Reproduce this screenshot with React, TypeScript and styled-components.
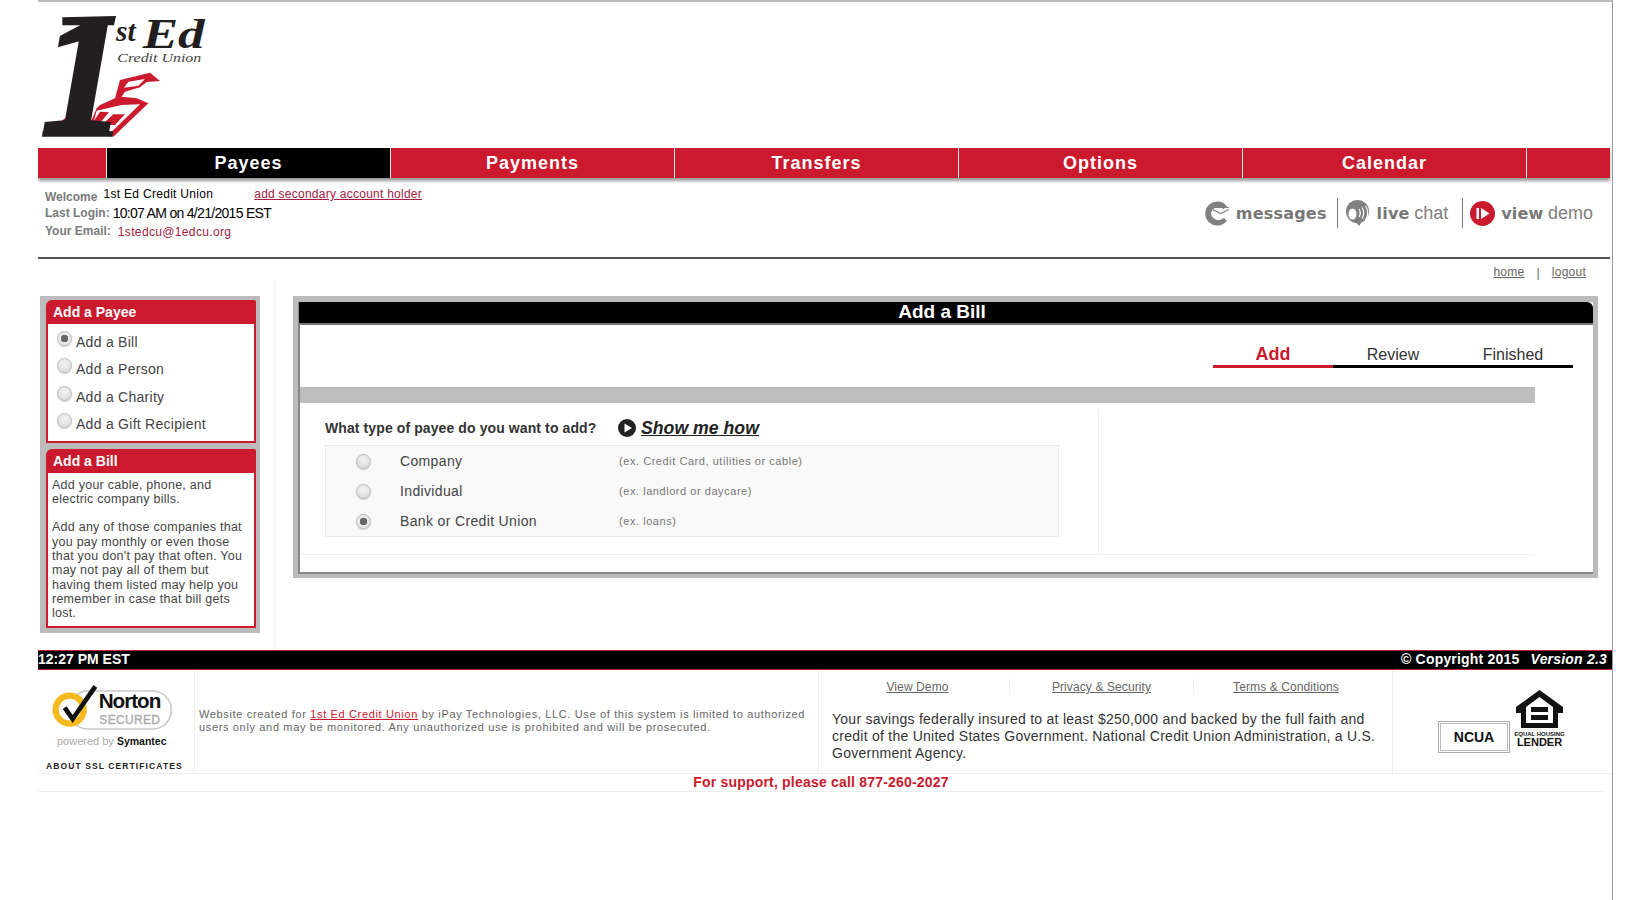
import React from 'react'
import styled, { createGlobalStyle } from 'styled-components'

const RED = '#cb1a2e'
const SANS = '"Liberation Sans", Arial, sans-serif'

const GlobalStyle = createGlobalStyle`
  html, body {
    margin: 0;
    padding: 0;
    background: #fff;
    font-family: ${SANS};
  }
  * { box-sizing: border-box; }
`

const Logo = () => (
  <LogoSvg viewBox="24 45 510 375">
    {/* house, coordinates taken from a 3x crop of the logo */}
    <polygon points="170,395 200,325 210,315 255,295 270,240 360,218 390,243 350,246 330,262 285,275 275,290 320,295 355,310 250,410" fill={RED} />
    <polygon points="295,245 345,237 325,257 282,263" fill="#fff" />
    <polygon points="200,332 275,315 330,313 245,395 185,388" fill="#fff" />
    <polygon points="185,373 210,335 237,337 205,375" fill={RED} />
    <polygon points="215,375 250,343 285,343 255,375" fill={RED} />
    <polygon points="60,392 110,350 100,394" fill={RED} />
    <text x="34" y="392" fontFamily="Liberation Serif" fontWeight="700" fontStyle="italic" fontSize="506" fill="#231f20" stroke="#231f20" strokeWidth="12">1</text>
    <polygon points="97,52 258,48 252,76 97,76" fill="#231f20" />
    <polygon points="38,394 250,394 246,410 36,410" fill="#231f20" />
    <text x="258" y="122" fontFamily="Liberation Serif" fontWeight="700" fontStyle="italic" fontSize="88" fill="#231f20">st</text>
    <text x="338" y="143" fontFamily="Liberation Serif" fontWeight="700" fontStyle="italic" fontSize="125" fill="#231f20" textLength="186" lengthAdjust="spacingAndGlyphs">Ed</text>
    <text x="262" y="186" fontFamily="Liberation Serif" fontStyle="italic" fontSize="40" fill="#444" textLength="252" lengthAdjust="spacingAndGlyphs">Credit Union</text>
  </LogoSvg>
)

const MessagesIcon = () => (
  <svg width="25" height="25" viewBox="0 0 25 25">
    <path d="M22 5.5A12 12 0 1 0 22 19.5L18.5 17A7.5 7.5 0 0 1 6 12.5A7.5 7.5 0 0 1 18.5 8Z" fill="#808080" />
    <path d="M8 8.5L15.5 12.5L24 8.5M8.5 6.5H24" fill="none" stroke="#808080" strokeWidth="1.2" />
  </svg>
)

const ChatIcon = () => (
  <svg width="26" height="26" viewBox="0 0 26 26">
    <circle cx="12.500" cy="11.500" r="11.500" fill="#808080" />
    <polygon points="9,20 19,19 14,26" fill="#808080" />
    <ellipse cx="7.500" cy="14" rx="4" ry="5.500" fill="#fff" />
    <path d="M14 9Q16.500 13 14 17M17 7.500Q20.500 13 17 18.500M20.500 6Q25 13 20.500 20" fill="none" stroke="#fff" strokeWidth="1.200" />
  </svg>
)

const DemoIcon = () => (
  <svg width="25" height="25" viewBox="0 0 25 25">
    <circle cx="12.5" cy="12.5" r="12.5" fill={RED} />
    <rect x="6.500" y="7" width="2.500" height="11" fill="#fff" />
    <polygon points="11,7 19.500,12.500 11,18" fill="#fff" />
  </svg>
)

const PlayIcon = () => (
  <PlaySvg viewBox="0 0 18 18">
    <circle cx="9" cy="9" r="9" fill="#222" />
    <polygon points="6.500,4.500 14,9 6.500,13.500" fill="#fff" />
  </PlaySvg>
)

const NortonSeal = () => (
  <NortonSvg viewBox="60 36 372 159">
    <rect x="118" y="66" width="306" height="114" rx="56" fill="none" stroke="#c9c9c9" strokeWidth="5" />
    <circle cx="119" cy="122" r="42" fill="#fff" stroke="#f6b91f" strokeWidth="19" />
    <path d="M104 116L128 150L196 52" fill="none" stroke="#111" strokeWidth="14" />
    <text x="206" y="118" fontFamily="Liberation Sans" fontWeight="700" fontSize="62" letterSpacing="-3" fill="#111">Norton</text>
    <text x="208" y="165" fontFamily="Liberation Sans" fontSize="36" letterSpacing="1" fill="#aaa" stroke="#aaa" strokeWidth="1">SECURED</text>
  </NortonSvg>
)

const HousingIcon = () => (
  <HousingSvg viewBox="0 0 47 58">
    <path d="M23.500 0L47 17V23H42V38H5V23H0V17ZM23.500 7L10 17V33H37V17Z" fill="#111" fillRule="evenodd" />
    <rect x="15" y="17" width="17" height="5" fill="#111" />
    <rect x="15" y="25" width="17" height="5" fill="#111" />
    <text x="23.500" y="46" textAnchor="middle" fontFamily="Liberation Sans" fontWeight="700" fontSize="6" fill="#111">EQUAL HOUSING</text>
    <text x="23.500" y="56" textAnchor="middle" fontFamily="Liberation Sans" fontWeight="700" fontSize="11" fill="#111">LENDER</text>
  </HousingSvg>
)

const payeeOptions = ['Add a Bill', 'Add a Person', 'Add a Charity', 'Add a Gift Recipient']
const billTypes = [
  { label: 'Company', hint: '(ex. Credit Card, utilities or cable)', checked: false },
  { label: 'Individual', hint: '(ex. landlord or daycare)', checked: false },
  { label: 'Bank or Credit Union', hint: '(ex. loans)', checked: true },
]
const tabs = ['Payees', 'Payments', 'Transfers', 'Options', 'Calendar']

const App = () => {
  return (
    <Page>
      <GlobalStyle />
      <Header>
        <Logo />
      </Header>
      <Nav>
        <NavEdge />
        {tabs.map((tab, i) => (
          <NavItem key={tab} $active={i === 0}>{tab}</NavItem>
        ))}
      </Nav>
      <InfoBar>
        <AccountInfo>
          <InfoRow>
            <InfoLabel $drop={3}>Welcome</InfoLabel>
            <WelcomeName>1st Ed Credit Union</WelcomeName>
            <SecondaryLink>add secondary account holder</SecondaryLink>
          </InfoRow>
          <InfoRow>
            <InfoLabel $drop={0}>Last Login:</InfoLabel>
            <LoginTime>10:07 AM on 4/21/2015 EST</LoginTime>
          </InfoRow>
          <InfoRow>
            <InfoLabel $drop={-1}>Your Email:</InfoLabel>
            <EmailValue>1stedcu@1edcu.org</EmailValue>
          </InfoRow>
        </AccountInfo>
        <Shortcuts>
          <Shortcut>
            <MessagesIcon />
            <ShortcutBold>messages</ShortcutBold>
          </Shortcut>
          <ShortcutDivider $left={10} />
          <Shortcut>
            <ChatIcon />
            <span><ShortcutBold>live</ShortcutBold> <ShortcutThin>chat</ShortcutThin></span>
          </Shortcut>
          <ShortcutDivider $left={14} />
          <Shortcut>
            <DemoIcon />
            <span><ShortcutBold>view</ShortcutBold> <ShortcutThin>demo</ShortcutThin></span>
          </Shortcut>
        </Shortcuts>
      </InfoBar>
      <UtilLinks>
        <UtilLink>home</UtilLink>
        <UtilSep>|</UtilSep>
        <UtilLink>logout</UtilLink>
      </UtilLinks>
      <Content>
        <SideCol>
          <SideFrame>
            <SidePanel>
              <SideHead>Add a Payee</SideHead>
              <PayeeList>
                {payeeOptions.map((opt, i) => (
                  <PayeeRow key={opt}>
                    <RadioDot type="radio" name="payee" defaultChecked={i === 0} />
                    {opt}
                  </PayeeRow>
                ))}
              </PayeeList>
            </SidePanel>
            <SidePanel>
              <SideHead>Add a Bill</SideHead>
              <SideText>
                <p>Add your cable, phone, and electric company bills.</p>
                <p>Add any of those companies that you pay monthly or even those that you don't pay that often. You may not pay all of them but having them listed may help you remember in case that bill gets lost.</p>
              </SideText>
            </SidePanel>
          </SideFrame>
        </SideCol>
        <MainFrame>
          <MainInner>
            <MainHead>Add a Bill</MainHead>
            <Steps>
              <Step $active>Add</Step>
              <Step>Review</Step>
              <Step>Finished</Step>
            </Steps>
            <GrayBar />
            <FormArea>
              <FormCol>
                <Question>
                  <QuestionText>What type of payee do you want to add?</QuestionText>
                  <PlayIcon />
                  <ShowMe>Show me how</ShowMe>
                </Question>
                <TypeTable>
                  {billTypes.map((t) => (
                    <TypeRow key={t.label}>
                      <RadioCell>
                        <RadioDot type="radio" name="billtype" defaultChecked={t.checked} />
                      </RadioCell>
                      <TypeLabel>{t.label}</TypeLabel>
                      <TypeHint>{t.hint}</TypeHint>
                    </TypeRow>
                  ))}
                </TypeTable>
              </FormCol>
            </FormArea>
          </MainInner>
        </MainFrame>
      </Content>
      <FooterBar>
        <span>12:27 PM EST</span>
        <CopyrightText>© Copyright 2015 <VersionTag>Version 2.3</VersionTag></CopyrightText>
      </FooterBar>
      <FooterRow>
        <NortonCell>
          <NortonSeal />
          <Powered>powered by <b>Symantec</b></Powered>
          <AboutSsl>ABOUT SSL CERTIFICATES</AboutSsl>
        </NortonCell>
        <LegalCell>
          Website created for <LegalLink>1st Ed Credit Union</LegalLink> by iPay Technologies, LLC. Use of this system is limited to authorized users only and may be monitored. Any unauthorized use is prohibited and will be prosecuted.
        </LegalCell>
        <InsuranceCell>
          <FooterLinks>
            <FooterLink>View Demo</FooterLink>
            <FooterLink>Privacy &amp; Security</FooterLink>
            <FooterLink>Terms &amp; Conditions</FooterLink>
          </FooterLinks>
          <InsuranceText>Your savings federally insured to at least $250,000 and backed by the full faith and credit of the United States Government. National Credit Union Administration, a U.S. Government Agency.</InsuranceText>
        </InsuranceCell>
        <BadgeCell>
          <NcuaBadge>
            <NcuaName>NCUA</NcuaName>
          </NcuaBadge>
          <HousingIcon />
        </BadgeCell>
      </FooterRow>
      <Support>For support, please call 877-260-2027</Support>
    </Page>
  )
}

export default App

const Page = styled.div`
  margin-left: 38px;
  width: 1575px;
  height: 900px;
  border-top: 2px solid #bbb;
  border-right: 1px solid #999;
  overflow: hidden;
`
const Header = styled.div`
  height: 146px;
  padding-top: 13px;
`
const LogoSvg = styled.svg`
  display: block;
  width: 170px;
  height: 125px;
  overflow: visible;
`
const Nav = styled.div`
  display: flex;
  width: 1572px;
  height: 30px;
  background: ${RED};
  box-shadow: 0 3px 3px #999;
`
const NavEdge = styled.div`
  width: 69px;
  border-right: 1px solid #eee;
`
const NavItem = styled.div<{ $active?: boolean }>`
  width: 284px;
  border-right: 1px solid #eee;
  background: ${(p) => (p.$active ? '#000' : RED)};
  color: #fff;
  font-size: 18px;
  font-weight: 700;
  letter-spacing: 1px;
  line-height: 30px;
  text-align: center;
`
const InfoBar = styled.div`
  display: flex;
  justify-content: space-between;
  width: 1572px;
  height: 81px;
  border-bottom: 2px solid #555;
  padding: 8px 17px 0 7px;
`
const AccountInfo = styled.div`
  display: flex;
  flex-direction: column;
`
const InfoRow = styled.div`
  display: flex;
  height: 19px;
  line-height: 16px;
  font-size: 12px;
`
const InfoLabel = styled.span<{ $drop: number }>`
  position: relative;
  top: ${(p) => p.$drop}px;
  color: #7a7a7a;
  font-weight: 700;
  font-size: 12px;
`
const WelcomeName = styled.span`
  margin-left: 6px;
  color: #000;
  letter-spacing: 0.3px;
`
const SecondaryLink = styled.a`
  margin-left: 41px;
  color: #a3203f;
  letter-spacing: 0.25px;
  text-decoration: underline;
`
const LoginTime = styled.span`
  margin-left: 3px;
  color: #000;
  font-size: 14px;
  letter-spacing: -0.7px;
`
const EmailValue = styled.span`
  margin-left: 7px;
  color: #a3203f;
  letter-spacing: 0.35px;
`
const Shortcuts = styled.div`
  display: flex;
  align-items: center;
  height: 54px;
`
const Shortcut = styled.div`
  display: flex;
  align-items: center;
  gap: 6px;
  color: #7f7f7f;
`
const ShortcutBold = styled.span`
  font-family: "DejaVu Sans", sans-serif;
  font-size: 16px;
  font-weight: 700;
  letter-spacing: 0.2px;
  color: #777;
`
const ShortcutThin = styled.span`
  font-size: 18px;
  color: #808080;
`
const ShortcutDivider = styled.div<{ $left: number }>`
  width: 1px;
  height: 30px;
  margin: 0 7px 0 ${(p) => p.$left}px;
  background: #777;
`
const UtilLinks = styled.div`
  display: flex;
  justify-content: flex-end;
  width: 1572px;
  height: 21px;
  padding: 5px 24px 0 0;
  font-size: 12px;
  letter-spacing: 0.25px;
  line-height: 16px;
  color: #666;
`
const UtilLink = styled.a`
  color: #666;
  text-decoration: underline;
`
const UtilSep = styled.span`
  margin: 1px 12px 0;
`
const Content = styled.div`
  display: flex;
  height: 370px;
`
const SideCol = styled.div`
  width: 238px;
  padding: 16px 0 0 2px;
  border-right: 1px solid #f0f0f0;
`
const SideFrame = styled.div`
  display: flex;
  flex-direction: column;
  gap: 6px;
  width: 220px;
  height: 337px;
  padding: 4px 4px 5px 6px;
  background: #bbb;
`
const SidePanel = styled.div`
  border: 2px solid ${RED};
  border-top-left-radius: 6px;
  border-top-right-radius: 2px;
  background: #fff;
  &:last-child {
    flex: 1;
  }
`
const SideHead = styled.div`
  height: 22px;
  background: ${RED};
  padding-left: 5px;
  color: #fff;
  font-size: 14px;
  font-weight: 700;
  line-height: 20px;
`
const PayeeList = styled.div`
  display: flex;
  flex-direction: column;
  padding: 6px 0 1px 9px;
`
const PayeeRow = styled.label`
  display: flex;
  align-items: flex-start;
  gap: 4px;
  height: 27.4px;
  color: #444;
  font-size: 14px;
  letter-spacing: 0.27px;
  line-height: 24px;
  input {
    margin-top: 1px;
  }
`
const RadioDot = styled.input`
  appearance: none;
  flex: none;
  width: 15px;
  height: 15px;
  margin: 0;
  border: 1px solid #bbb;
  border-radius: 50%;
  background: radial-gradient(circle at 50% 35%, #f4f4f4, #d6d6d6);
  box-shadow: 0 1px 1px #ccc;
  &:checked {
    background: radial-gradient(circle, #666 0, #666 3.5px, #e8e8e8 4px);
  }
`
const SideText = styled.div`
  width: 197px;
  padding: 5px 0 0 4px;
  color: #444;
  font-size: 12.5px;
  letter-spacing: 0.25px;
  line-height: 14.3px;
  p {
    margin: 0 0 14.3px;
  }
  p:last-child {
    margin: 0;
  }
`
const MainFrame = styled.div`
  width: 1305px;
  height: 282px;
  margin: 16px 0 0 17px;
  padding: 6px 5px 4px 5px;
  background: #bbb;
`
const MainInner = styled.div`
  height: 100%;
  border-left: 2px solid #888;
  border-bottom: 2px solid #888;
  background: #fff;
`
const MainHead = styled.div`
  height: 23px;
  margin-left: -1px;
  padding-right: 8px;
  border-top-right-radius: 6px;
  border-bottom: 2px solid #777;
  background: #000;
  color: #fff;
  font-size: 19px;
  font-weight: 700;
  line-height: 19px;
  text-align: center;
`
const Steps = styled.div`
  display: flex;
  justify-content: flex-end;
  height: 62px;
  padding: 19px 20px 0 0;
`
const Step = styled.div<{ $active?: boolean }>`
  width: 120px;
  height: 24px;
  border-bottom: 3px solid ${(p) => (p.$active ? RED : '#000')};
  color: ${(p) => (p.$active ? RED : '#333')};
  font-size: ${(p) => (p.$active ? '18px' : '16px')};
  font-weight: ${(p) => (p.$active ? 700 : 400)};
  line-height: 21px;
  text-align: center;
`
const GrayBar = styled.div`
  width: 1235px;
  height: 16px;
  background: #bdbdbd;
`
const FormArea = styled.div`
  width: 1235px;
  height: 152px;
  padding-top: 6px;
  border-bottom: 1px solid #f0f0f0;
`
const FormCol = styled.div`
  width: 799px;
  height: 145px;
  padding: 7px 0 0 25px;
  border-right: 1px solid #eee;
`
const Question = styled.div`
  display: flex;
  align-items: center;
  height: 24px;
`
const QuestionText = styled.span`
  width: 293px;
  color: #333;
  font-size: 14px;
  font-weight: 700;
  letter-spacing: 0.1px;
`
const PlaySvg = styled.svg`
  width: 18px;
  height: 18px;
  margin-right: 5px;
`
const ShowMe = styled.a`
  color: #222;
  font-size: 17.7px;
  font-weight: 700;
  font-style: italic;
  text-decoration: underline;
`
const TypeTable = styled.div`
  width: 734px;
  height: 92px;
  margin-top: 5px;
  padding: 0;
  border: 1px solid #e8e8e8;
  background: #f9f9f9;
`
const TypeRow = styled.label`
  display: flex;
  align-items: center;
  height: 30px;
`
const RadioCell = styled.span`
  display: flex;
  width: 74px;
  padding-left: 30px;
`
const TypeLabel = styled.span`
  width: 219px;
  color: #444;
  font-size: 14px;
  letter-spacing: 0.35px;
`
const TypeHint = styled.span`
  color: #777;
  font-size: 11px;
  letter-spacing: 0.55px;
`
const FooterBar = styled.div`
  display: flex;
  justify-content: space-between;
  height: 20px;
  padding-right: 5px;
  border-top: 1px solid ${RED};
  border-bottom: 1px solid ${RED};
  background: #000;
  color: #fff;
  font-size: 14px;
  font-weight: 700;
  line-height: 17px;
`
const CopyrightText = styled.span`
  letter-spacing: 0.2px;
`
const VersionTag = styled.i`
  margin-left: 7px;
`
const FooterRow = styled.div`
  display: flex;
  height: 104px;
  border-bottom: 1px solid #eee;
`
const NortonCell = styled.div`
  display: flex;
  flex-direction: column;
  width: 157px;
  padding: 11px 0 0 12px;
  border-right: 1px solid #eee;
`
const NortonSvg = styled.svg`
  display: block;
  width: 124px;
  height: 53px;
`
const Powered = styled.div`
  margin: 1px 0 0 7px;
  color: #aaa;
  font-size: 11px;
  line-height: 13px;
  white-space: nowrap;
  b {
    color: #111;
    font-size: 10.5px;
  }
`
const AboutSsl = styled.div`
  margin: 12px 0 0 -4px;
  color: #222;
  font-size: 8.5px;
  font-weight: 700;
  letter-spacing: 1.1px;
  line-height: 12px;
  white-space: nowrap;
`
const LegalCell = styled.div`
  width: 624px;
  padding: 38px 10px 0 4px;
  border-right: 1px solid #eee;
  color: #666;
  font-size: 11px;
  letter-spacing: 0.65px;
  line-height: 13px;
`
const LegalLink = styled.a`
  color: ${RED};
  text-decoration: underline;
`
const InsuranceCell = styled.div`
  width: 574px;
  padding: 9px 14px 0 13px;
  border-right: 1px solid #eee;
`
const FooterLinks = styled.div`
  display: flex;
  margin-left: -6px;
  height: 16px;
`
const FooterLink = styled.a`
  width: 187px;
  border-right: 1px solid #eee;
  color: #666;
  font-size: 12px;
  letter-spacing: 0.1px;
  line-height: 16px;
  text-align: center;
  text-decoration: underline;
  &:last-child {
    border-right: 0;
  }
`
const InsuranceText = styled.div`
  margin-top: 16px;
  color: #333;
  font-size: 14px;
  letter-spacing: 0.26px;
  line-height: 17px;
`
const BadgeCell = styled.div`
  display: flex;
  align-items: flex-end;
  gap: 6px;
  flex: 1;
  padding: 0 0 25px 45px;
`
const NcuaBadge = styled.div`
  display: flex;
  align-items: center;
  justify-content: center;
  width: 72px;
  height: 32px;
  margin-bottom: -5px;
  border: 1px solid #aaa;
  box-shadow: inset 0 0 0 1px #fff, inset 0 0 0 2px #bbb;
`
const NcuaName = styled.span`
  color: #111;
  font-size: 14px;
  font-weight: 700;
`
const HousingSvg = styled.svg`
  width: 47px;
  height: 58px;
  overflow: visible;
`
const Support = styled.div`
  height: 18px;
  width: 1566px;
  border-bottom: 1px solid #eee;
  color: ${RED};
  font-size: 14px;
  font-weight: 700;
  letter-spacing: 0.2px;
  line-height: 17px;
  text-align: center;
`
